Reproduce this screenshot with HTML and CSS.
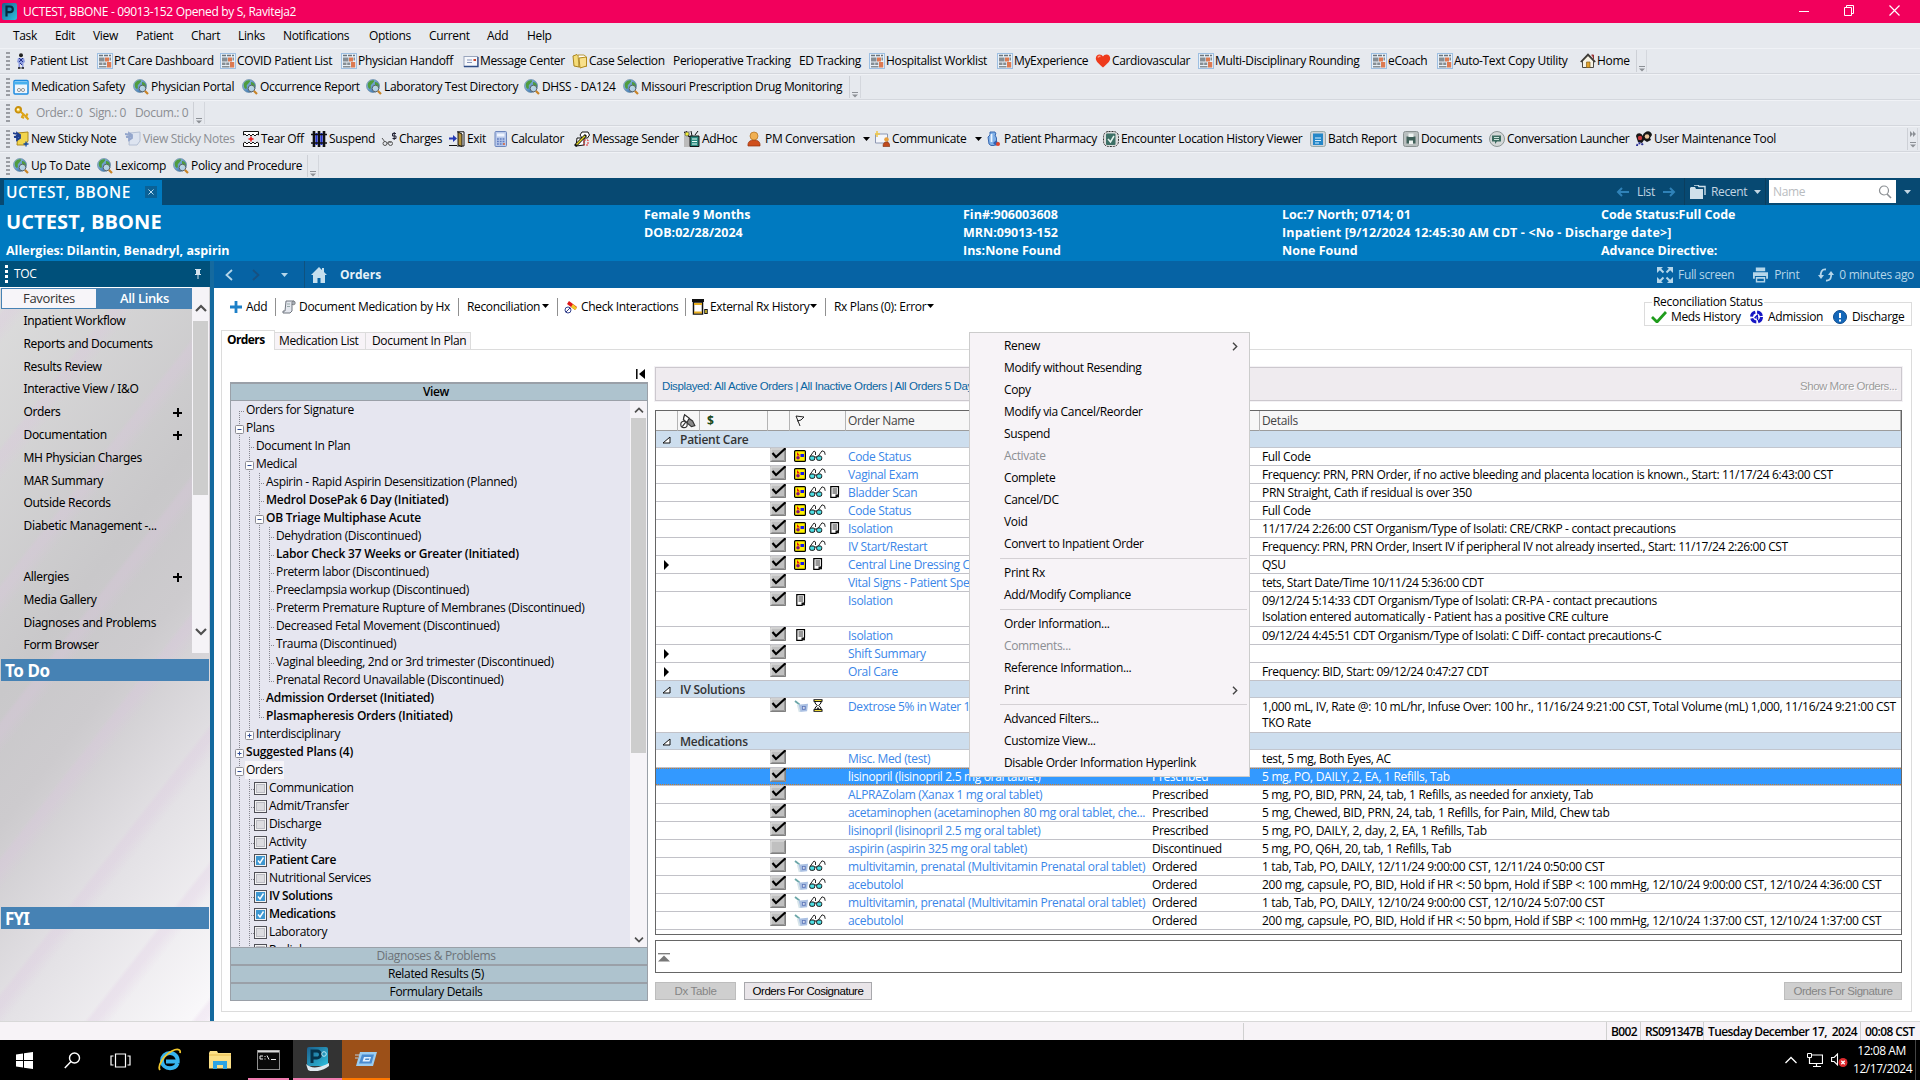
FILE: index.html
```html
<!DOCTYPE html>
<html lang="en">
<head>
<meta charset="utf-8">
<title>UCTEST, BBONE - 09013-152</title>
<link rel="stylesheet" href="styles.css">
</head>
<body>
<svg class="defs" aria-hidden="true">
  <linearGradient id="gGlobe" x1="0" y1="0" x2="1" y2="1"><stop offset="0" stop-color="#a9d4f2"/><stop offset="1" stop-color="#1f5c9c"/></linearGradient>
  <linearGradient id="gP" x1="0" y1="0" x2="1" y2="1"><stop offset="0" stop-color="#1b5f8c"/><stop offset="1" stop-color="#2fc0de"/></linearGradient>
  <symbol id="person" viewBox="0 0 16 16"><circle cx="8" cy="2.3" r="2" fill="#222"/><path d="M5 5h6l1 4-1.500 1v5H9v-4H7v4H5.500v-5L4 9z" fill="#8f9fdf"/><path d="M6 5l4 4M10 5l-4 4M7 10l2 2" stroke="#22308c"/><path d="M5 15h2.500M8.500 15H11" stroke="#111" stroke-width="1.500"/></symbol>
  <symbol id="dash" viewBox="0 0 16 16"><rect x=".5" y=".5" width="15" height="15" fill="#e9f1f8" stroke="#9dbfe2"/><path d="M2 2.500h12" stroke="#6a747c" stroke-width="1.400" stroke-dasharray="4 1"/><path d="M2 4.500h5.500v4H2zM2 9.500h3.500v2.500H2zM2 13h7.500v1.500H2zM6.200 9.500h3v2.500h-3zM12.500 4.500H14v3h-1.500z" fill="#868e94"/><path d="M8 4.500h4v4H8zM10 9h4.200v5.500H10z" fill="#dc7a52"/></symbol>
  <symbol id="mail" viewBox="0 0 16 16"><rect x="1" y="3.500" width="13.500" height="10" fill="#f6f8fc" stroke="#9aa6bd"/><path d="M1 13.500h14V4" fill="none" stroke="#2e4c86" stroke-width="1.300"/><path d="M4 7h5M4 9.500h5" stroke="#8796b8"/><path d="M10.500 6h2.500v2h-2.500z" fill="#c8452d"/></symbol>
  <symbol id="case" viewBox="0 0 16 16"><path d="M1 3l4-1.500 2 2V14l-5-1z" fill="#f5dc78" stroke="#a88420"/><path d="M6 2h6l2.500 2v9.500H7z" fill="#fff" stroke="#b8983a"/><path d="M7 5l7.500-1v9L8 15z" fill="#f8e08a" stroke="#b28a1c"/></symbol>
  <symbol id="heart" viewBox="0 0 16 16"><path d="M8 14.500C4 11 .8 8.500 .8 5.300.8 2.900 2.600 1.500 4.500 1.500c1.500 0 2.800.8 3.500 2 .7-1.200 2-2 3.500-2 1.900 0 3.700 1.400 3.700 3.800C15.200 8.500 12 11 8 14.500z" fill="#ee3a1c"/><path d="M3 4.500c.4-1 1.500-1.300 2.500-1" stroke="#ff9c80" stroke-width="1.500" fill="none"/></symbol>
  <symbol id="home" viewBox="0 0 16 16"><path d="M2.500 8v6.500h11V8L8 2.500z" fill="#f7f3e4" stroke="#4c4a44"/><path d="M.8 9L8 1.500 15.200 9" fill="none" stroke="#3d3a35" stroke-width="1.700"/><path d="M11.500 2h2v4" fill="#c44" stroke="#833"/><path d="M6.500 9h3.500v5.500H6.500z" fill="#e2a22c" stroke="#80601c" stroke-width=".7"/></symbol>
  <symbol id="form" viewBox="0 0 16 16"><rect x="1" y="1.500" width="14" height="13.500" rx="1" fill="#eef6fd" stroke="#1d8ae0" stroke-width="1.500"/><path d="M1 4h14" stroke="#48b0ee" stroke-width="3"/><circle cx="6" cy="11" r="1.600" fill="none" stroke="#999"/><circle cx="10" cy="11" r="1.600" fill="none" stroke="#999"/></symbol>
  <symbol id="globe" viewBox="0 0 16 16"><circle cx="7" cy="7" r="6.500" fill="url(#gGlobe)" stroke="#5a7f9c" stroke-width=".6"/><path d="M2 4c2-3 5-3 6-2.500S6 5 5 6s1 3-1 4C2.500 9.500 1 7 2 4zM9 3c2-.5 4 2 4 4l-2 2-2-2z" fill="#4f9c3e"/><circle cx="9.500" cy="9.500" r="3.300" fill="#d9edf7" fill-opacity=".75" stroke="#59646c"/><path d="M12 12l3 3" stroke="#c98326" stroke-width="2.200"/></symbol>
  <symbol id="keys" viewBox="0 0 16 16"><circle cx="4.300" cy="4.800" r="2.800" fill="#f6d050" stroke="#c88f0c" stroke-width="1.800"/><circle cx="4" cy="4.500" r="1" fill="#fff"/><path d="M6.500 6.500l7 6.500M9.500 8.500L8 12l2 1M13.500 8.500L12 12l2.500 2.500" stroke="#dda51a" stroke-width="2" fill="none"/></symbol>
  <symbol id="note" viewBox="0 0 16 16"><path d="M5 2l10-1v9l-3 4H4z" fill="#f2d54c" stroke="#ad8a1c"/><path d="M0 2l6 1.500M1 6l6-1M4 2l3 2v3L4 9z" stroke="#1d3d8e" stroke-width="1.800" fill="#4c86d0"/><path d="M13 10.500v5M10.500 13h5" stroke="#14489c" stroke-width="1.300"/></symbol>
  <symbol id="notes" viewBox="0 0 16 16"><path d="M5 2l10-1v9l-3 4H4z" fill="#dde4f0" stroke="#b4c0d4"/><path d="M0 3l6 1M1 6l6-1M4 2l3 2v3L4 9z" stroke="#93a6cc" stroke-width="1.800" fill="#a8b8da"/></symbol>
  <symbol id="tear" viewBox="0 0 16 16"><path d="M.5 4V.5h15V4l-1.500-1L12 5l-2-2-2 2-2-2-2 2-2-2zM.5 12v3.500h15V12L14 11l-2 2-2-2-2 2-2-2-2 2-2-2z" fill="#fff" stroke="#111"/><path d="M8 5.500v5M5.500 8h5" stroke="#e11" stroke-width="1.500"/></symbol>
  <symbol id="fence" viewBox="0 0 16 16"><path d="M3 0v16M8 0v16M13 0v16" stroke="#111" stroke-width="2.600"/><path d="M5.500 2v12M10.500 2v12" stroke="#2434d8" stroke-width="2"/><path d="M0 3.500h16M0 12h16" stroke="#111" stroke-width="1.400"/></symbol>
  <symbol id="charges" viewBox="0 0 16 16"><path d="M1 7l3 4M6 13c1-3 3-3 4-1" stroke="#555" fill="none"/><circle cx="4" cy="12.500" r="2" fill="none" stroke="#555"/><circle cx="9.500" cy="12.500" r="2" fill="none" stroke="#555"/><path d="M15 2.500h-3.500v2.500H15v2.500h-3.500M13.200 1v8" stroke="#223" fill="none"/></symbol>
  <symbol id="exit" viewBox="0 0 16 16"><path d="M8 .8h7V15H8" fill="#fff" stroke="#111"/><path d="M9 1l4 2v12.500L9 14z" fill="#b4933c" stroke="#111"/><path d="M0 6.500h4V4l4 3.500L4 11V8.500H0z" fill="#2439b4"/><path d="M0 14.500h8" stroke="#111"/></symbol>
  <symbol id="calc" viewBox="0 0 16 16"><rect x="2" y=".5" width="11.500" height="15" rx="1" fill="#b9c9ea" stroke="#6c86bd"/><path d="M4 2.500h7.500v3H4z" fill="#eef4ff"/><path d="M4 8h7.500M4 10.500h7.500M4 13h7.500" stroke="#5f7cc0" stroke-width="1.600" stroke-dasharray="1.800 1"/><path d="M10 13h2" stroke="#e46a3a" stroke-width="1.500"/></symbol>
  <symbol id="sender" viewBox="0 0 16 16"><path d="M6 4l2-3h6l1.500 3-2 3H8zM3 7h7v7l-8 1z" fill="#fff" stroke="#111"/><path d="M1 15L12 4" stroke="#111" stroke-width="3"/><path d="M2.500 13.500L11 5" stroke="#e4d826" stroke-width="1.500"/><path d="M10 9h4v5h-4z" fill="none" stroke="#e02a2a" stroke-dasharray="2 1"/></symbol>
  <symbol id="adhoc" viewBox="0 0 16 16"><path d="M0 0h6v16H0z" fill="#bbb"/><path d="M6 5h9v10.500H6z" fill="#2a8a80" stroke="#111"/><path d="M8 8h5M8 10.500h5M8 13h5" stroke="#e8fff8"/><path d="M0 1l6 5M2 0l3 6M7 0l1 5M14 0l-3 4" stroke="#111"/><circle cx="3" cy="3" r="2" fill="#f0ec3a" stroke="#333" stroke-width=".5"/></symbol>
  <symbol id="user" viewBox="0 0 16 16"><path d="M1 15c-.5-4 2-6 6-6s6.500 2 6 6z" fill="#cf4f1d" stroke="#94300c" stroke-width=".7"/><circle cx="7" cy="5" r="4" fill="#f0b052" stroke="#b26f1c" stroke-width=".7"/></symbol>
  <symbol id="comm" viewBox="0 0 16 16"><path d="M1.500 3h12v9h-12z" fill="#f4f6fb" stroke="#8c97b2"/><path d="M1 3h5M3 0v6" stroke="#f0c84a" stroke-width="1.500"/><circle cx="12.500" cy="8.500" r="2.300" fill="#eaa03c"/><path d="M9 15.500c0-3 1-4.500 3.500-4.500s3.300 2 3.300 4.500z" fill="#c04a1d" stroke="#7d2b0a" stroke-width=".6"/></symbol>
  <symbol id="pharm" viewBox="0 0 16 16"><path d="M4 1h5l1 2-1 1 1.500 3v6L8 14.500H5L3 13 2 6l2-2z" fill="#7fb0e8" stroke="#3868b0"/><path d="M5.500 3v8" stroke="#eaf4ff" stroke-width="1.800"/><path d="M7 12l3-2.500 3 2.500-3 3z" fill="#3562b2"/><circle cx="12" cy="13" r="2" fill="#e0452b"/></symbol>
  <symbol id="check" viewBox="0 0 16 16"><rect x=".5" y=".5" width="15" height="15" rx="5" fill="#ddd" stroke="#333" stroke-dasharray="2 1"/><rect x="3" y="2.500" width="9.500" height="11.500" rx="1" fill="#3d7066"/><path d="M5 8l2.500 3L11 5" stroke="#e8f4ef" stroke-width="1.500" fill="none"/></symbol>
  <symbol id="batch" viewBox="0 0 16 16"><rect x=".5" y=".5" width="15" height="15" rx="2" fill="#cfd4d8" stroke="#9aa"/><rect x="3" y="2.500" width="10" height="11.500" fill="#2587c8"/><path d="M5 7h6M5 9.500h6M5 12h4" stroke="#d6efff"/></symbol>
  <symbol id="docs" viewBox="0 0 16 16"><rect x=".5" y=".5" width="15" height="15" rx="2" fill="#b9bfbf" stroke="#8a9292"/><path d="M3.500 5.500h9v7h-9z" fill="#3e5f58"/><path d="M5.500 2.500h5v3.500h-5zM6 9.500h4v3.500H6z" fill="#eef3f1"/></symbol>
  <symbol id="conv" viewBox="0 0 16 16"><circle cx="8" cy="8" r="7.500" fill="#d4d8d8" stroke="#8d9696"/><path d="M3 4.500h9v6H8l-2 2.500v-2.500H3z" fill="#3c6b60"/><path d="M5 6.500h5M5 8.500h5" stroke="#cfe4dc"/></symbol>
  <symbol id="users" viewBox="0 0 16 16"><path d="M0 5c1-4 6-3 6.500 0C9-1 15-1 16 4l-2 3 1 2-4 2-3-2-2 3-4-1z" fill="#161616"/><circle cx="4" cy="7" r="2.200" fill="#c8383c"/><circle cx="11" cy="5.500" r="2.300" fill="#e9c49a"/><path d="M1 15c0-3 4-4 6-1" stroke="#2c3296" stroke-width="2" stroke-dasharray="2 1" fill="none"/></symbol>
  <symbol id="flowchk" viewBox="0 0 16 14"><path d="M0 0h16v14H0z" fill="#c0c0c0"/><path d="M1 13V1h14" fill="none" stroke="#e2e2e2"/><path d="M.5 13.500h15V.5" fill="none" stroke="#808080"/><path d="M1.500 12.500H14.500V1" fill="none" stroke="#989898"/></symbol>
  <symbol id="on" viewBox="0 0 16 14"><use href="#flowchk"/><path d="M2.500 5L6 9 15.500.3" fill="none" stroke="#000" stroke-width="2.200"/></symbol>
  <symbol id="plan" viewBox="0 0 12 12"><rect x=".6" y=".6" width="10.800" height="10.800" rx="1" fill="#fff200" stroke="#000" stroke-width="1.200"/><path d="M3 2l3 3.500H3z" fill="#e81010"/><path d="M6.500 4H10v3H6.500z" fill="#1414f0"/><circle cx="4" cy="7.800" r="1.800" fill="#86107c"/></symbol>
  <symbol id="glass" viewBox="0 0 17 11"><path d="M1 6.500L5 1l1.500 1v3M9 6.500L13 .8l2.500 1 .7 3" fill="none" stroke="#111" stroke-width=".9"/><rect x=".7" y="6" width="5" height="4.300" rx="1.500" fill="#4fe0e6" stroke="#111"/><rect x="7.700" y="6" width="5" height="4.300" rx="1.500" fill="#4fe0e6" stroke="#111"/><path d="M5.500 7h2.500" stroke="#111"/></symbol>
  <symbol id="paper" viewBox="0 0 10 12"><path d="M.8.6h7.700v8L6 11.300H.8z" fill="#fff" stroke="#000" stroke-width="1.200"/><path d="M2.500 3h4.500M2.500 5h4.500M2.500 7h4.500" stroke="#333"/><path d="M5.500 8.500h3.500v2.800H5.500z" fill="#111"/></symbol>
  <symbol id="iv" viewBox="0 0 16 14"><path d="M1 1l5 4" stroke="#6aa6a8" stroke-width="2"/><path d="M4 5l11-1-1 8-8 1z" fill="#a9bfe2"/><path d="M4 5l2 8" stroke="#d6e4ea" stroke-width="2"/><rect x="8.500" y="6.500" width="4" height="4" fill="#5f78bb"/><path d="M10.500 7.300v2.400M9.300 8.500h2.400" stroke="#fff" stroke-width=".8"/></symbol>
  <symbol id="hour" viewBox="0 0 10 13"><path d="M2 2h6v2L5.800 6.500 8 9v2H2V9l2.200-2.500L2 4z" fill="#fff" stroke="#000"/><path d="M3 10.500h4L5 8z" fill="#333"/><path d="M.5 1.500h9M.5 11.500h9" stroke="#000" stroke-width="2.600"/><path d="M1.500 1.500h7M1.500 11.500h7" stroke="#ecd838" stroke-width="1.200"/></symbol>
  <symbol id="tri" viewBox="0 0 5 10"><path d="M0 0l5 5-5 5z" fill="#000"/></symbol>
  <symbol id="fold" viewBox="0 0 9 8"><path d="M1 7h7V1z" fill="#fff" stroke="#111"/></symbol>
  <symbol id="minus" viewBox="0 0 10 10"><rect x=".5" y=".5" width="8" height="8" rx="1" fill="#fdfdfd" stroke="#8c8c94"/><path d="M2.500 4.500h4" stroke="#2d4a96"/></symbol>
  <symbol id="plus" viewBox="0 0 10 10"><rect x=".5" y=".5" width="8" height="8" rx="1" fill="#fdfdfd" stroke="#8c8c94"/><path d="M2.500 4.500h4M4.500 2.500v4" stroke="#2d4a96"/></symbol>
  <symbol id="box" viewBox="0 0 13 13"><rect x=".5" y=".5" width="12" height="12" fill="#f3f3f3" stroke="#4f4f57"/><rect x="2.500" y="2.500" width="8" height="8" fill="#dcdce0" stroke="#bcbcc4"/></symbol>
  <symbol id="boxon" viewBox="0 0 13 13"><rect x=".5" y=".5" width="12" height="12" fill="#f3f3f3" stroke="#4f4f57"/><rect x="2" y="2" width="9" height="9" fill="#3f97d0"/><path d="M4 6.500l2 2.500 3.500-5.500" stroke="#fff" stroke-width="1.400" fill="none"/></symbol>
  <symbol id="down" viewBox="0 0 7 4"><path d="M0 0h7L3.500 4z" fill="currentColor"/></symbol>
  <symbol id="over" viewBox="0 0 6 6"><path d="M0 .5h6" stroke="#8c9096"/><path d="M0 2.500h6L3 5.500z" fill="#8c9096"/></symbol>
  <symbol id="up" viewBox="0 0 12 8"><path d="M1 7l5-5 5 5" fill="none" stroke="#505050" stroke-width="2.200"/></symbol>
  <symbol id="dn" viewBox="0 0 12 8"><path d="M1 1l5 5 5-5" fill="none" stroke="#505050" stroke-width="2.200"/></symbol>
  <symbol id="ar" viewBox="0 0 6 9"><path d="M1 .8l3.700 3.700L1 8.200" fill="none" stroke="#444" stroke-width="1.400"/></symbol>
</svg>

<header class="title">
  <svg class="applogo" viewBox="0 0 15 17"><rect width="15" height="17" rx="2" fill="url(#gP)"/><path d="M4.500 13.500V3.500h3.500a2.700 2.700 0 010 5.600H4.500" fill="none" stroke="#062b40" stroke-width="2.200"/></svg>
  <span>UCTEST, BBONE - 09013-152 Opened by S, Raviteja2</span>
  <div class="winbtns">
    <svg viewBox="0 0 11 11"><path d="M0 6.500h10" stroke="#fff"/></svg>
    <svg viewBox="0 0 11 11"><path d="M.5 2.500h7v8h-7zM2.500 2.500v-2h7v8h-2" fill="none" stroke="#fff"/></svg>
    <svg viewBox="0 0 11 11"><path d="M.5.5l10 10M10.500.5l-10 10" stroke="#fff" stroke-width="1.200"/></svg>
  </div>
</header>
<nav class="menubar"><span>Task</span><span>Edit</span><span>View</span><span>Patient</span><span>Chart</span><span>Links</span><span>Notifications</span><span>Options</span><span>Current</span><span>Add</span><span>Help</span></nav>

<div class="toolbar t1"><b></b>
<a><svg><use href="#person"/></svg>Patient List</a><a><svg><use href="#dash"/></svg>Pt Care Dashboard</a><a><svg><use href="#dash"/></svg>COVID Patient List</a><a><svg><use href="#dash"/></svg>Physician Handoff</a><a><svg><use href="#mail"/></svg>Message Center</a><a><svg><use href="#case"/></svg>Case Selection</a><a>Perioperative Tracking</a><a>ED Tracking</a><a><svg><use href="#dash"/></svg>Hospitalist Worklist</a><a><svg><use href="#dash"/></svg>MyExperience</a><a><svg><use href="#heart"/></svg>Cardiovascular</a><a><svg><use href="#dash"/></svg>Multi-Disciplinary Rounding</a><a><svg><use href="#dash"/></svg>eCoach</a><a><svg><use href="#dash"/></svg>Auto-Text Copy Utility</a><a><svg><use href="#home"/></svg>Home</a><em><svg><use href="#over"/></svg></em></div>
<div class="toolbar t2"><b></b>
<a><svg><use href="#form"/></svg>Medication Safety</a><a><svg><use href="#globe"/></svg>Physician Portal</a><a><svg><use href="#globe"/></svg>Occurrence Report</a><a><svg><use href="#globe"/></svg>Laboratory Test Directory</a><a><svg><use href="#globe"/></svg>DHSS - DA124</a><a><svg><use href="#globe"/></svg>Missouri Prescription Drug Monitoring</a><em><svg><use href="#over"/></svg></em></div>
<div class="toolbar t3"><b></b>
<a><svg><use href="#keys"/></svg></a><a>Order.: 0</a><a>Sign.: 0</a><a>Docum.: 0</a><em><svg><use href="#over"/></svg></em></div>
<div class="toolbar t4"><b></b>
<a><svg><use href="#note"/></svg>New Sticky Note</a><a class="off"><svg><use href="#notes"/></svg>View Sticky Notes</a><a><svg><use href="#tear"/></svg>Tear Off</a><a><svg><use href="#fence"/></svg>Suspend</a><a><svg><use href="#charges"/></svg>Charges</a><a><svg><use href="#exit"/></svg>Exit</a><a><svg><use href="#calc"/></svg>Calculator</a><a><svg><use href="#sender"/></svg>Message Sender</a><a><svg><use href="#adhoc"/></svg>AdHoc</a><a><svg><use href="#user"/></svg>PM Conversation<svg class="dd"><use href="#down"/></svg></a><a><svg><use href="#comm"/></svg>Communicate<svg class="dd"><use href="#down"/></svg></a><a><svg><use href="#pharm"/></svg>Patient Pharmacy</a><a><svg><use href="#check"/></svg>Encounter Location History Viewer</a><a><svg><use href="#batch"/></svg>Batch Report</a><a><svg><use href="#docs"/></svg>Documents</a><a><svg><use href="#conv"/></svg>Conversation Launcher</a><a><svg><use href="#users"/></svg>User Maintenance Tool</a><em class="two"><svg viewBox="0 0 6 6"><path d="M0 0l3 3-3 3zM3 0l3 3-3 3z" fill="#8c9096"/></svg><svg><use href="#over"/></svg></em></div>
<div class="toolbar t5"><b></b>
<a><svg><use href="#globe"/></svg>Up To Date</a><a><svg><use href="#globe"/></svg>Lexicomp</a><a><svg><use href="#globe"/></svg>Policy and Procedure</a><em><svg><use href="#over"/></svg></em></div>

<div class="tabbar">
  <div class="pttab"><span>UCTEST, BBONE</span><svg viewBox="0 0 12 12"><rect width="12" height="12" fill="#0a6196"/><path d="M3.500 3.500l5 5M8.500 3.500l-5 5" stroke="#b9dcf0"/></svg></div>
  <div class="tabnav">
    <svg class="nav" viewBox="0 0 13 10"><path d="M13 5H2M6 1L2 5l4 4" fill="none" stroke="#2f82b8" stroke-width="2"/></svg>
    <span class="lst">List</span>
    <svg class="nav" viewBox="0 0 13 10"><path d="M0 5h11M7 1l4 4-4 4" fill="none" stroke="#2f82b8" stroke-width="2"/></svg>
    <div class="recent"><svg class="fold" viewBox="0 0 16 14"><path d="M0 3l1-1h4l1 2h7v10H0z" fill="#cfe0ea"/><path d="M4 0h4l1 1.500h6V10" fill="none" stroke="#cfe0ea" stroke-width="1.400"/></svg><span>Recent</span><svg class="dd"><use href="#down"/></svg></div>
    <div class="search"><span>Name</span><svg viewBox="0 0 14 14"><circle cx="6" cy="5.500" r="4.500" fill="none" stroke="#8b8f93" stroke-width="1.200"/><path d="M9 9l4 4" stroke="#8b8f93" stroke-width="1.600"/></svg></div>
    <svg class="dd last"><use href="#down"/></svg>
  </div>
</div>
<section class="banner">
  <div><h1>UCTEST, BBONE</h1><p>Allergies: Dilantin, Benadryl, aspirin</p></div>
  <div><p>Female 9 Months</p><p>DOB:02/28/2024</p></div>
  <div><p>Fin#:906003608</p><p>MRN:09013-152</p><p>Ins:None Found</p></div>
  <div><p>Loc:7 North; 0714; 01</p><p class="wide">Inpatient [9/12/2024 12:45:30 AM CDT - &lt;No - Discharge date&gt;]</p><p>None Found</p></div>
  <div><p>Code Status:Full Code</p><p class="blank"></p><p>Advance Directive:</p></div>
</section>

<div class="work">
  <aside class="toc">
    <div class="tochead"><b></b><span>TOC</span><svg viewBox="0 0 8 10"><path d="M1 0h6v1H6v4h1v1H4.500v4h-1V6H1V5h1V1H1z" fill="#d5e4ee"/></svg></div>
    <div class="tocbody">
      <div class="tocmain">
        <div class="toctabs"><span>Favorites</span><span class="sel">All Links</span></div>
        <ul><li>Inpatient Workflow</li><li>Reports and Documents</li><li>Results Review</li><li>Interactive View / I&amp;O</li><li class="m">Orders</li><li class="m">Documentation</li><li>MH Physician Charges</li><li>MAR Summary</li><li>Outside Records</li><li>Diabetic Management -...</li><li class="m skip">Allergies</li><li>Media Gallery</li><li>Diagnoses and Problems</li><li>Form Browser</li></ul>
      </div>
      <div class="sb tocsb"><svg><use href="#up"/></svg><i></i><svg><use href="#dn"/></svg></div>
    </div>
    <h2>To Do</h2>
    <h2 class="fyi">FYI</h2>
  </aside>
  <div class="strip"></div>
  <main>
    <div class="pagebar">
      <svg class="prev" viewBox="0 0 8 12"><path d="M7 1L1.500 6 7 11" fill="none" stroke="#b5d6ea" stroke-width="1.800"/></svg>
      <svg class="next" viewBox="0 0 8 12"><path d="M1 1l5.500 5L1 11" fill="none" stroke="#185080" stroke-width="1.800"/></svg>
      <svg class="dd"><use href="#down"/></svg>
      <div class="here"><svg viewBox="0 0 16 16"><path d="M8 0L0 8h2v8h4.500v-5h3v5H14V8h2L13 5V1h-2v2z" fill="#c6dfee"/></svg><b>Orders</b></div>
      <div class="pagetools">
        <svg viewBox="0 0 16 16"><path d="M0 0h6L4.200 1.800l3 3-1.400 1.400-3-3L0 6zM16 0v6l-2.800-2.800-3 3-1.400-1.400 3-3L10 0zM0 16v-6l2.800 2.800 3-3 1.400 1.400-3 3L6 16zM16 16h-6l1.800-1.800-3-3 1.400-1.400 3 3L16 10z" fill="#b5d6ea"/></svg><span>Full screen</span>
        <svg class="pr" viewBox="0 0 16 16"><path d="M3 0h10v4H3zM0 5h16v7h-2V9H2v3H0zM3 10h10v6H3z" fill="#b5d6ea"/><path d="M4.500 12h7v2.500h-7z" fill="#0663a4"/></svg><span>Print</span>
        <svg class="rf" viewBox="0 0 16 14"><path d="M8 1.500C4 1 2 4 3 9M8 12.500c4 .5 6-2.500 5-7.500" fill="none" stroke="#b5d6ea" stroke-width="1.800"/><path d="M0 7h6l-3 4zM10 7h6l-3-4z" fill="#b5d6ea"/></svg><span>0 minutes ago</span>
      </div>
    </div>
    <div class="actions">
      <div class="act a1"><svg class="ai" viewBox="0 0 12 12"><path d="M6 0v12M0 6h12" stroke="#1d80c8" stroke-width="2.800"/></svg>Add</div>
      <div class="act a2"><svg class="ai" viewBox="0 0 14 14"><path d="M4 1h8v3h-2v7l-2 2H1v-2h2z" fill="#e4e7ee" stroke="#6f757e"/><path d="M5 4h3M5 6.500h3" stroke="#9aa"/><circle cx="11.500" cy="3" r="1.800" fill="#a6adb8" stroke="#666" stroke-width=".6"/></svg>Document Medication by Hx</div>
      <div class="act a3">Reconciliation<svg class="dd"><use href="#down"/></svg></div>
      <div class="act a4"><svg class="ai" viewBox="0 0 14 14"><path d="M5 1l8 6-2 3-8-6z" fill="#e01818"/><path d="M9 4l4 4-2 2-4-3z" fill="#f0cc28"/><circle cx="4" cy="10" r="3" fill="#fff" stroke="#33408c"/><path d="M2 12l4-4" stroke="#33408c"/></svg>Check Interactions</div>
      <div class="act a5"><svg class="ai" viewBox="0 0 16 16"><path d="M0 0h12v3H0z" fill="#111"/><path d="M1.500 3h9v12h-9z" fill="#fff" stroke="#111" stroke-width="1.500"/><path d="M2 5h8M2 13.500h8" stroke="#e8ae20" stroke-width="2"/><path d="M14 10v5" stroke="#111" stroke-width="3.500"/><path d="M14 11v3" stroke="#e8d030" stroke-width="1.500"/></svg>External Rx History<svg class="dd"><use href="#down"/></svg></div>
      <div class="act a6">Rx Plans (0): Error<svg class="dd"><use href="#down"/></svg></div>
      <fieldset class="recon"><legend>Reconciliation Status</legend>
        <svg viewBox="0 0 16 12"><path d="M1 6l5 5L15 1" fill="none" stroke="#1f9c1c" stroke-width="2.800"/></svg><span>Meds History</span>
        <svg class="adm" viewBox="0 0 14 14"><circle cx="7" cy="7" r="5" fill="none" stroke="#1717c4" stroke-width="3" stroke-dasharray="6 1.850"/><path d="M5 8h4M8 4.500v5.500M5 8l3-3" stroke="#1717c4" stroke-width="1.100"/></svg><span>Admission</span>
        <svg class="dis" viewBox="0 0 14 14"><circle cx="7" cy="7" r="6.500" fill="#1468ba" stroke="#0d4c8e"/><path d="M7 3v5M7 9.500v2" stroke="#fff" stroke-width="2"/></svg><span>Discharge</span>
      </fieldset>
    </div>
    <div class="tabs"><span class="cur">Orders</span><span>Medication List</span><span>Document In Plan</span></div>
    <div class="panel">
      <div class="leftcol">
        <div class="collapse"><svg viewBox="0 0 9 10"><path d="M.8 0v10" stroke="#000" stroke-width="1.500"/><path d="M9 0v10L3 5z" fill="#000"/></svg></div>
        <div class="viewhead">View</div>
        <div class="treewrap">
          <ul class="tree">
            <li><i class="f"></i>Orders for Signature</li>
            <li><i class="x"><svg><use href="#minus"/></svg></i>Plans</li>
            <li><i class="v"></i><i class="t"></i>Document In Plan</li>
            <li><i class="v"></i><i class="x"><svg><use href="#minus"/></svg></i>Medical</li>
            <li><i class="v"></i><i class="v"></i><i class="t"></i>Aspirin - Rapid Aspirin Desensitization (Planned)</li>
            <li class="b"><i class="v"></i><i class="v"></i><i class="t"></i>Medrol DosePak 6 Day (Initiated)</li>
            <li class="b"><i class="v"></i><i class="v"></i><i class="x"><svg><use href="#minus"/></svg></i>OB Triage Multiphase Acute</li>
            <li><i class="v"></i><i class="v"></i><i class="v"></i><i class="t"></i>Dehydration (Discontinued)</li>
            <li class="b"><i class="v"></i><i class="v"></i><i class="v"></i><i class="t"></i>Labor Check 37 Weeks or Greater (Initiated)</li>
            <li><i class="v"></i><i class="v"></i><i class="v"></i><i class="t"></i>Preterm labor (Discontinued)</li>
            <li><i class="v"></i><i class="v"></i><i class="v"></i><i class="t"></i>Preeclampsia workup (Discontinued)</li>
            <li><i class="v"></i><i class="v"></i><i class="v"></i><i class="t"></i>Preterm Premature Rupture of Membranes (Discontinued)</li>
            <li><i class="v"></i><i class="v"></i><i class="v"></i><i class="t"></i>Decreased Fetal Movement (Discontinued)</li>
            <li><i class="v"></i><i class="v"></i><i class="v"></i><i class="t"></i>Trauma (Discontinued)</li>
            <li><i class="v"></i><i class="v"></i><i class="v"></i><i class="t"></i>Vaginal bleeding, 2nd or 3rd trimester (Discontinued)</li>
            <li><i class="v"></i><i class="v"></i><i class="v"></i><i class="l"></i>Prenatal Record Unavailable (Discontinued)</li>
            <li class="b"><i class="v"></i><i class="v"></i><i class="t"></i>Admission Orderset (Initiated)</li>
            <li class="b"><i class="v"></i><i class="v"></i><i class="l"></i>Plasmapheresis Orders (Initiated)</li>
            <li><i class="v"></i><i class="x end"><svg><use href="#plus"/></svg></i>Interdisciplinary</li>
            <li class="b"><i class="x"><svg><use href="#plus"/></svg></i>Suggested Plans (4)</li>
            <li><i class="x"><svg><use href="#minus"/></svg></i><span class="hl">Orders</span></li>
            <li><i class="v"></i><i class="t"></i><svg><use href="#box"/></svg>Communication</li>
            <li><i class="v"></i><i class="t"></i><svg><use href="#box"/></svg>Admit/Transfer</li>
            <li><i class="v"></i><i class="t"></i><svg><use href="#box"/></svg>Discharge</li>
            <li><i class="v"></i><i class="t"></i><svg><use href="#box"/></svg>Activity</li>
            <li class="b c"><i class="v"></i><i class="t"></i><svg><use href="#boxon"/></svg>Patient Care</li>
            <li><i class="v"></i><i class="t"></i><svg><use href="#box"/></svg>Nutritional Services</li>
            <li class="b c"><i class="v"></i><i class="t"></i><svg><use href="#boxon"/></svg>IV Solutions</li>
            <li class="b c"><i class="v"></i><i class="t"></i><svg><use href="#boxon"/></svg>Medications</li>
            <li><i class="v"></i><i class="t"></i><svg><use href="#box"/></svg>Laboratory</li>
            <li><i class="v"></i><i class="t"></i><svg><use href="#box"/></svg>Radiology</li>
          </ul>
          <div class="sb treesb"><svg><use href="#up"/></svg><i></i><svg><use href="#dn"/></svg></div>
        </div>
        <div class="drawer off">Diagnoses &amp; Problems</div>
        <div class="drawer">Related Results (5)</div>
        <div class="drawer">Formulary Details</div>
      </div>
      <div class="rightcol">
        <div class="filter"><span>Displayed: All Active Orders | All Inactive Orders | All Orders 5 Days</span><span class="more">Show More Orders...</span></div>
        <div class="grid">
          <div class="row head"><span></span><span class="c"><svg class="pill" viewBox="0 0 14 14"><path d="M4 2l7 5 2 4-3 1-7-6z" fill="#8a8a8a" stroke="#333"/><path d="M4 1.500l4 3-2 4-3-3z" fill="#fff" stroke="#333"/><circle cx="3.500" cy="10" r="2.800" fill="#fff" stroke="#333"/><path d="M2 12l3-4" stroke="#333"/></svg></span><span class="c dol">$</span><span></span><span class="c"><svg class="flag" viewBox="0 0 10 12"><path d="M1 1l8 1-3 3-4 1M1 1l4 10" fill="none" stroke="#222"/></svg></span><span>Order Name</span><span>Status</span><span>Details</span></div>
          <div class="group"><svg><use href="#fold"/></svg>Patient Care</div>
          <div class="row"><u></u><s><svg><use href="#on"/></svg></s><q><svg class="pl"><use href="#plan"/></svg><svg class="gl"><use href="#glass"/></svg></q><a>Code Status</a><span></span><span>Full Code</span></div>
          <div class="row"><u></u><s><svg><use href="#on"/></svg></s><q><svg class="pl"><use href="#plan"/></svg><svg class="gl"><use href="#glass"/></svg></q><a>Vaginal Exam</a><span></span><span>Frequency: PRN, PRN Order, if no active bleeding and placenta location is known., Start: 11/17/24 6:43:00 CST</span></div>
          <div class="row"><u></u><s><svg><use href="#on"/></svg></s><q><svg class="pl"><use href="#plan"/></svg><svg class="gl"><use href="#glass"/></svg><svg class="pa"><use href="#paper"/></svg></q><a>Bladder Scan</a><span></span><span>PRN Straight, Cath if residual is over 350</span></div>
          <div class="row"><u></u><s><svg><use href="#on"/></svg></s><q><svg class="pl"><use href="#plan"/></svg><svg class="gl"><use href="#glass"/></svg></q><a>Code Status</a><span></span><span>Full Code</span></div>
          <div class="row"><u></u><s><svg><use href="#on"/></svg></s><q><svg class="pl"><use href="#plan"/></svg><svg class="gl"><use href="#glass"/></svg><svg class="pa"><use href="#paper"/></svg></q><a>Isolation</a><span></span><span>11/17/24 2:26:00 CST Organism/Type of Isolati: CRE/CRKP - contact precautions</span></div>
          <div class="row"><u></u><s><svg><use href="#on"/></svg></s><q><svg class="pl"><use href="#plan"/></svg><svg class="gl"><use href="#glass"/></svg></q><a>IV Start/Restart</a><span></span><span class="snug">Frequency: PRN, PRN Order, Insert IV if peripheral IV not already inserted., Start: 11/17/24 2:26:00 CST</span></div>
          <div class="row"><u><svg><use href="#tri"/></svg></u><s><svg><use href="#on"/></svg></s><q><svg class="pl"><use href="#plan"/></svg><svg class="pa mid"><use href="#paper"/></svg></q><a>Central Line Dressing Change</a><span></span><span>QSU</span></div>
          <div class="row"><u></u><s><svg><use href="#on"/></svg></s><q></q><a>Vital Signs - Patient Specific</a><span></span><span class="snug">tets, Start Date/Time 10/11/24 5:36:00 CDT</span></div>
          <div class="row tall"><u></u><s><svg><use href="#on"/></svg></s><q><svg class="pa one"><use href="#paper"/></svg></q><a>Isolation</a><span></span><span>09/12/24 5:14:33 CDT Organism/Type of Isolati: CR-PA - contact precautions<br>Isolation entered automatically - Patient has a positive CRE culture</span></div>
          <div class="row"><u></u><s><svg><use href="#on"/></svg></s><q><svg class="pa one"><use href="#paper"/></svg></q><a>Isolation</a><span></span><span>09/12/24 4:45:51 CDT Organism/Type of Isolati: C Diff- contact precautions-C</span></div>
          <div class="row"><u><svg><use href="#tri"/></svg></u><s><svg><use href="#on"/></svg></s><q></q><a>Shift Summary</a><span></span><span></span></div>
          <div class="row"><u><svg><use href="#tri"/></svg></u><s><svg><use href="#on"/></svg></s><q></q><a>Oral Care</a><span></span><span class="snug">Frequency: BID, Start: 09/12/24 0:47:27 CDT</span></div>
          <div class="group"><svg><use href="#fold"/></svg>IV Solutions</div>
          <div class="row tall"><u></u><s><svg><use href="#on"/></svg></s><q><svg class="iv"><use href="#iv"/></svg><svg class="ho"><use href="#hour"/></svg></q><a class="snug">Dextrose 5% in Water 1,000 mL</a><span></span><span>1,000 mL, IV, Rate @: 10 mL/hr, Infuse Over: 100 hr., 11/16/24 9:21:00 CST, Total Volume (mL) 1,000, 11/16/24 9:21:00 CST<br>TKO Rate</span></div>
          <div class="group"><svg><use href="#fold"/></svg>Medications</div>
          <div class="row"><u></u><s><svg><use href="#on"/></svg></s><q></q><a>Misc. Med (test)</a><span></span><span>test, 5 mg, Both Eyes, AC</span></div>
          <div class="row picked"><u></u><s><svg><use href="#on"/></svg></s><q></q><a>lisinopril (lisinopril 2.5 mg oral tablet)</a><span>Prescribed</span><span class="airy">5 mg, PO, DAILY, 2, EA, 1 Refills, Tab</span></div>
          <div class="row"><u></u><s><svg><use href="#on"/></svg></s><q></q><a>ALPRAZolam (Xanax 1 mg oral tablet)</a><span>Prescribed</span><span>5 mg, PO, BID, PRN, 24, tab, 1 Refills, as needed for anxiety, Tab</span></div>
          <div class="row"><u></u><s><svg><use href="#on"/></svg></s><q></q><a>acetaminophen (acetaminophen 80 mg oral tablet, che...</a><span>Prescribed</span><span class="airy">5 mg, Chewed, BID, PRN, 24, tab, 1 Refills, for Pain, Mild, Chew tab</span></div>
          <div class="row"><u></u><s><svg><use href="#on"/></svg></s><q></q><a>lisinopril (lisinopril 2.5 mg oral tablet)</a><span>Prescribed</span><span class="airy">5 mg, PO, DAILY, 2, day, 2, EA, 1 Refills, Tab</span></div>
          <div class="row"><u></u><s><svg><use href="#flowchk"/></svg></s><q></q><a>aspirin (aspirin 325 mg oral tablet)</a><span>Discontinued</span><span>5 mg, PO, Q6H, 20, tab, 1 Refills, Tab</span></div>
          <div class="row"><u></u><s><svg><use href="#on"/></svg></s><q><svg class="iv"><use href="#iv"/></svg><svg class="gl"><use href="#glass"/></svg></q><a class="airy">multivitamin, prenatal (Multivitamin Prenatal oral tablet)</a><span>Ordered</span><span>1 tab, Tab, PO, DAILY, 12/11/24 9:00:00 CST, 12/11/24 0:50:00 CST</span></div>
          <div class="row"><u></u><s><svg><use href="#on"/></svg></s><q><svg class="iv"><use href="#iv"/></svg><svg class="gl"><use href="#glass"/></svg></q><a>acebutolol</a><span>Ordered</span><span class="airy">200 mg, capsule, PO, BID, Hold if HR &lt;: 50 bpm, Hold if SBP &lt;: 100 mmHg, 12/10/24 9:00:00 CST, 12/10/24 4:36:00 CST</span></div>
          <div class="row"><u></u><s><svg><use href="#on"/></svg></s><q><svg class="iv"><use href="#iv"/></svg><svg class="gl"><use href="#glass"/></svg></q><a class="airy">multivitamin, prenatal (Multivitamin Prenatal oral tablet)</a><span>Ordered</span><span>1 tab, Tab, PO, DAILY, 12/10/24 9:00:00 CST, 12/10/24 5:07:00 CST</span></div>
          <div class="row"><u></u><s><svg><use href="#on"/></svg></s><q><svg class="iv"><use href="#iv"/></svg><svg class="gl"><use href="#glass"/></svg></q><a>acebutolol</a><span>Ordered</span><span class="airy">200 mg, capsule, PO, BID, Hold if HR &lt;: 50 bpm, Hold if SBP &lt;: 100 mmHg, 12/10/24 1:37:00 CST, 12/10/24 1:37:00 CST</span></div>
        </div>
        <div class="detailbar"><svg viewBox="0 0 12 9"><path d="M0 .7h12" stroke="#777" stroke-width="1.300"/><path d="M0 8.500h12L6 2.500z" fill="#777"/></svg></div>
        <div class="buttons"><button class="dx" disabled>Dx Table</button><button class="cos">Orders For Cosignature</button><button class="sig" disabled>Orders For Signature</button></div>
      </div>
    </div>
  </main>
</div>

<footer class="status"><span></span><span>B002</span><span>RS091347B</span><span>Tuesday December 17,&nbsp; 2024</span><span>00:08 CST</span></footer>
<div class="taskbar">
  <div class="tb"><svg width="17" height="17" viewBox="0 0 17 17"><path d="M0 2.500l7-1V8H0zM8 1.300L17 0v8H8zM0 9h7v6.500l-7-1zM8 9h9v8l-9-1.300z" fill="#fff"/></svg></div>
  <div class="tb"><svg width="17" height="17" viewBox="0 0 17 17"><circle cx="10.500" cy="6" r="5" fill="none" stroke="#fff" stroke-width="1.400"/><path d="M7 9.500L.8 16" stroke="#fff" stroke-width="1.500"/></svg></div>
  <div class="tb"><svg width="21" height="15" viewBox="0 0 21 15"><path d="M5.500 1h10v13h-10zM3.500 3H1v9h2.500M17.500 3H20v9h-2.500" fill="none" stroke="#fff" stroke-width="1.200"/></svg></div>
  <div class="tb ie"><svg width="24" height="24" viewBox="0 0 24 24"><path d="M19.500 15.500c-1.200 3-4 4.700-7.500 4.700-4.500 0-8-3-8-7.500S7.500 5 12 5s8 3.500 7.700 8.500H8" fill="none" stroke="#37b4ee" stroke-width="4"/><path d="M2 22C-1 18 6 7 14 3c5-2.500 9-2 8 2" fill="none" stroke="#f0c62c" stroke-width="1.800"/></svg></div>
  <div class="tb"><svg width="22" height="18" viewBox="0 0 22 18"><path d="M0 2l1-2h7l1 2h13v15.500H0z" fill="#fbdf86"/><path d="M4 18v-8h14v8h-4v-4H8v4z" fill="#2ca4e4"/><path d="M0 4h22" stroke="#e6bb4c"/></svg></div>
  <div class="tb run"><svg width="23" height="20" viewBox="0 0 23 20"><rect x=".5" y=".5" width="22" height="19" fill="#0a0a0a" stroke="#8f8f8f"/><path d="M1 1.500h21" stroke="#ddd" stroke-width="2"/><path d="M3 6h3M3 6v3h3M8 6v1M8 8.500v1M10 5.500l2 4M14 9.500h5" stroke="#eee" fill="none"/></svg></div>
  <div class="tb front"><svg width="24" height="24" viewBox="0 0 24 24"><rect x="1" y="0" width="21" height="19" rx="2" fill="url(#gP)"/><path d="M0 17c6 6 16 3 23-1v3c-6 5-17 7-21 4z" fill="#dfe9ef"/><path d="M6 16V4h5a3.500 3.500 0 010 7H6" fill="none" stroke="#06324a" stroke-width="3"/><circle cx="18" cy="7" r="2.300" fill="none" stroke="#bfe9f5"/></svg></div>
  <div class="tb hot"><svg width="22" height="15" viewBox="0 0 22 15"><path d="M5 0h17l-4 14H1z" fill="#9ccdf0"/><path d="M7 2.500h12l-2.500 9H4z" fill="#4a8cd0"/><path d="M9 5h7l-1.500 4.500H7.500z" fill="#dff0ff"/><path d="M10.500 6.500h4l-.5 1.500h-4z" fill="#4a8cd0"/><path d="M0 3h5M0 6h3" stroke="#bcd"/></svg></div>
  <div class="tray">
    <svg class="y1" viewBox="0 0 12 8"><path d="M.5 7L6 1.500 11.500 7" fill="none" stroke="#fff" stroke-width="1.300"/></svg>
    <svg class="y2" viewBox="0 0 16 14"><path d="M4 2h11.500v8.500H2.500V5M6 13.500h8M9.500 11v2" fill="none" stroke="#fff" stroke-width="1.200"/><path d="M.5.5h4v4h-4z" fill="#000" stroke="#fff"/></svg>
    <svg class="y3" viewBox="0 0 17 14"><path d="M.6 4.500h2.500L6.500 1v11L3.100 8.500H.6z" fill="none" stroke="#fff" stroke-width="1.100"/><circle cx="12" cy="9.500" r="4.500" fill="#dc2a2e"/><path d="M10.300 7.800l3.400 3.400M13.700 7.800l-3.400 3.400" stroke="#fff" stroke-width="1.300"/></svg>
    <div class="clock"><span>12:08 AM</span><span>12/17/2024</span></div>
  </div>
</div>

<div class="menu">
  <div>Renew<svg><use href="#ar"/></svg></div><div>Modify without Resending</div><div>Copy</div><div>Modify via Cancel/Reorder</div><div>Suspend</div><div class="off">Activate</div><div>Complete</div><div>Cancel/DC</div><div>Void</div><div>Convert to Inpatient Order</div><hr>
  <div>Print Rx</div><div>Add/Modify Compliance</div><hr>
  <div>Order Information...</div><div class="off">Comments...</div><div>Reference Information...</div><div>Print<svg><use href="#ar"/></svg></div><hr>
  <div>Advanced Filters...</div><div>Customize View...</div><div>Disable Order Information Hyperlink</div>
</div>
</body>
</html>
```
FILE: styles.css
```css
* { box-sizing: border-box; margin: 0; padding: 0; }
body { width: 1920px; height: 1080px; overflow: hidden; position: relative; display: flex; flex-direction: column; font: 12px/16px "Open Sans", "Noto Sans", sans-serif; letter-spacing: -0.34px; color: #000; background: #fff; white-space: nowrap; }
svg { flex: none; display: block; }
ul { list-style: none; }
.defs { position: absolute; width: 0; height: 0; }
.dd { width: 7px; height: 4px; }

.title { height: 23px; background: #f2005c; color: #fff; display: flex; align-items: center; flex: none; }
.applogo { width: 15px; height: 17px; margin: 0 6px 0 2px; }
.winbtns { margin-left: auto; display: flex; gap: 34px; padding: 0 20px 3px 0; }
.winbtns svg { width: 11px; height: 11px; }

.menubar { height: 25px; background: #e6e9ee; display: grid; grid-template-columns: 42px 38px 43px 55px 47px 45px 86px 60px 58px 40px 40px; padding-left: 13px; align-items: center; flex: none; }

.toolbar { height: 26px; background: #e6e9ee; border-top: 1px solid #f0f2f6; border-bottom: 1px solid #d4d7dd; display: grid; align-items: center; flex: none; }
.toolbar b { width: 4px; height: 18px; margin-left: 6px; background: repeating-linear-gradient(#9a9da3 0 2px, transparent 2px 4px); }
.toolbar a { display: flex; align-items: center; }
.toolbar a > svg:first-child { width: 16px; height: 16px; margin-right: 2px; }
.toolbar a .dd { margin-left: auto; margin-right: 4px; }
.toolbar em { border-left: 1px solid #cdd0d6; height: 22px; display: flex; flex-direction: column; justify-content: flex-end; padding-left: 2px; border-right: 1px solid #d4d7dd; }
.toolbar em svg { width: 6px; height: 6px; }
.toolbar em.two { justify-content: space-between; padding-top: 3px; padding-bottom: 2px; }
.t1 { grid-template-columns: 13px 84px 123px 121px 122px 109px 101px 126px 70px 128px 98px 103px 173px 66px 143px 56px 11px; }
.t1 a > svg:first-child { margin-right: 1px; }
.t2 { grid-template-columns: 13px 120px 109px 124px 158px 99px 226px 12px; }
.t3 { grid-template-columns: 14px 22px 53px 46px 58px 12px; color: #8b8e93; }
.t4 { grid-template-columns: 13px 112px 118px 68px 70px 68px 44px 81px 110px 63px 127px 112px 117px 207px 93px 86px 147px 271px 11px; }
.t5 { grid-template-columns: 13px 84px 76px 134px 12px; height: 26px; border-bottom: 0; }
.off { color: #8b8e93; }

.tabbar { height: 27px; background: #074972; display: flex; align-items: flex-end; flex: none; }
.pttab { margin-left: 4px; width: 158px; height: 25px; background: #007ac0; color: #fff; display: flex; align-items: center; padding: 0 0 2px 2px; font-size: 15.5px; font-weight: 600; letter-spacing: 0.55px; }
.pttab span { width: 139px; }
.pttab svg { width: 12px; height: 12px; }
.tabnav { margin-left: auto; height: 27px; display: flex; align-items: center; color: #c3d6e3; padding-right: 9px; }
.nav { width: 13px; height: 10px; }
.lst { margin: 0 8px; width: 18px; }
.recent { display: flex; align-items: center; border: solid #0b3e5e; border-width: 0 1px; height: 27px; margin-left: 8px; padding: 0 4px 0 5px; }
.recent span { width: 36px; margin: 0 7px 0 5px; }
.fold { width: 16px; height: 14px; }
.search { width: 127px; height: 23px; background: #fff; margin: 0 8px 0 3px; display: flex; align-items: center; justify-content: space-between; padding: 0 4px; color: #b9bcc0; }
.search svg { width: 14px; height: 14px; }

.banner { height: 56px; background: #007ac0; color: #fff; font-size: 12.5px; letter-spacing: 0; font-weight: 700; flex: none; display: grid; grid-template-columns: 644px 319px 319px 319px 1fr; line-height: 18px; }
.banner div { padding-top: 1px; }
.banner h1 { font-size: 20px; line-height: 34px; height: 36px; padding-left: 6px; letter-spacing: 0.1px; margin-top: -1px; }
.banner div:first-child p { padding-left: 6px; margin-top: 1px; }
.banner .wide { letter-spacing: 0.14px; }
.blank { height: 18px; }

.work { flex: none; height: 760px; display: flex; }
.toc { width: 210px; flex: none; font-family: "Noto Sans", sans-serif; background: repeating-linear-gradient(128deg, transparent 0 30px, rgba(222,196,226,.25) 34px 40px, transparent 52px 84px), linear-gradient(128deg, #dedede 0%, #c9c8ca 42%, #cdcbce 55%, #e4e2e6 75%, #fbfafc 100%); }
.tochead { height: 26px; background: #00507a; color: #fff; display: flex; align-items: center; padding: 0 8px 0 5px; font-family: "Open Sans", sans-serif; }
.tochead b { width: 3px; height: 18px; background: repeating-linear-gradient(#fff 0 3px, transparent 3px 5px); }
.tochead span { margin-left: 6px; flex: 1; }
.tochead svg { width: 8px; height: 10px; }
.tocbody { display: flex; height: 366px; }
.tocmain { width: 192px; }
.toctabs { display: flex; height: 22px; font: 13px/19px "Open Sans", sans-serif; text-align: center; border-top: 1px solid #fff; }
.toctabs span { width: 95px; background: #f7f5f9; border: 1px solid #4682b4; border-width: 1px 0 1px 1px; margin-left: 1px; color: #333; }
.toctabs .sel { width: 96px; background: #4682b4; color: #fff; margin: 0; font-weight: 600; }
.toc ul { padding-top: 1px; }
.toc li { height: 22.8px; line-height: 22px; padding-left: 23.5px; display: flex; padding-right: 10px; }
.toc li.m::after { content: ""; width: 9px; height: 9px; margin: 7px 0 0 auto; background: linear-gradient(#000, #000) 0 3.500px/9px 2px no-repeat, linear-gradient(#000, #000) 3.500px 0/2px 9px no-repeat; }
.toc li.skip { margin-top: 28px; }
.sb { background: #f5f3f7; display: flex; flex-direction: column; align-items: center; }
.sb svg { width: 12px; height: 8px; }
.sb i { background: #cdcdcd; }
.tocsb { width: 17px; padding-top: 17px; }
.tocsb i { width: 15px; height: 174px; margin: 9px 0 133px; }
.toc h2 { height: 22px; margin: 6px 1px 0; background: #4682b4; color: #fff; font-size: 17px; line-height: 23px; padding-left: 4px; letter-spacing: -0.4px; }
.toc h2.fyi { margin-top: 226px; letter-spacing: -0.8px; }
.strip { width: 4px; background: #156a9f; flex: none; }
main { flex: 1; display: flex; flex-direction: column; }
.pagebar { height: 27px; background: #0663a4; display: flex; align-items: center; color: #b5d6ea; flex: none; }
.prev, .next { width: 8px; height: 12px; margin-left: 11px; }
.next { margin-left: 19px; }
.pagebar > .dd { margin-left: 21px; }
.here { height: 27px; border-left: 1px solid #0f527f; margin-left: 16px; padding-left: 6px; display: flex; align-items: center; gap: 13px; color: #e5f1f8; padding-top: 1px; letter-spacing: 0; }
.here svg { width: 16px; height: 16px; }
.pagetools { margin-left: auto; display: flex; align-items: center; padding-right: 6px; }
.pagetools svg { width: 16px; height: 16px; margin-right: 5px; }
.pagetools .pr { margin: 0 6px 0 19px; width: 15px; }
.pagetools .rf { margin: 0 5px 0 19px; height: 14px; }

.actions { height: 42px; flex: none; display: flex; padding: 10px 8px 0 16px; }
.act { display: flex; height: 18px; align-items: center; }
.ai { width: 14px; height: 14px; margin-right: 3px; }
.act + .act { border-left: 1px solid #909090; padding-left: 6px; }
.act .dd { margin: -3px 0 0 1px; }
.a1 { width: 45px; }
.a1 .ai { width: 12px; height: 12px; margin-right: 4px; }
.a2 { width: 183px; letter-spacing: -0.3px; }
.a3 { width: 99px; }
.act.a3 { padding-left: 8px; }
.a3 .dd { margin-left: 2px; }
.a4 { width: 128px; }
.a5 { width: 140px; }
.a5 .ai { width: 16px; height: 16px; margin-right: 2px; }
.act.a6 { padding-left: 8px; }
.recon { margin: -5px 0 0 auto; width: 268px; height: 33px; border: 1px solid #dcdcdc; padding: 0 0 0 6px; display: flex; align-items: center; align-self: flex-start; }
.recon legend { margin-left: 1px; padding: 0 1px; line-height: 18px; letter-spacing: -0.3px; }
.recon span { margin: -2px 8px 0 4px; width: 70px; }
.recon svg { width: 16px; height: 12px; margin-top: -3px; }
.recon .adm { width: 15px; height: 14px; }
.recon .adm + span { width: 56px; margin-right: 9px; }
.recon .dis { width: 14px; height: 14px; }
.recon .dis + span { width: 52px; margin: -2px 0 0 5px; }

.tabs { height: 19px; flex: none; display: flex; align-items: flex-end; padding-left: 7px; }
.tabs span { height: 17px; border: 1px solid #dcdcdc; border-bottom: 0; padding: 0 4px; background: #f7f3f7; line-height: 16px; width: 91px; border-left-width: 0; }
.tabs span:last-child { width: 105px; padding-left: 6px; }
.tabs .cur { background: #fff; height: 20px; font-weight: 700; width: 54px; padding-left: 5px; border-left-width: 1px; line-height: 18px; margin-bottom: -1px; position: relative; letter-spacing: -0.6px; }
.panel { flex: none; height: 663px; margin: 0 8px 0 7px; border: 1px solid #dcdcdc; display: flex; padding: 0 9px 0 8px; gap: 7px; }
.leftcol { width: 418px; }
.collapse { height: 32px; padding: 19px 3px 0 0; display: flex; justify-content: flex-end; }
.collapse svg { width: 9px; height: 10px; }
.viewhead { height: 19px; background: #aec3ce; border: 2px solid #9aa0a8; border-width: 2px 1px 1px; text-align: center; line-height: 16px; font-weight: 600; padding-right: 6px; }
.treewrap { height: 546px; background: #e6e6f0; border: solid #9aa0a8; border-width: 0 1px; display: flex; overflow: hidden; justify-content: space-between; }
.tree { padding-left: 4px; }
.tree li { height: 18px; display: flex; align-items: center; }
.tree i { width: 10px; height: 18px; flex: none; }
.tree i:last-of-type { margin-right: 1px; }
.v, .t { background: repeating-linear-gradient(#85858f 0 1px, transparent 1px 2px) 4px 0/1px 18px no-repeat; }
.t { background: repeating-linear-gradient(#85858f 0 1px, transparent 1px 2px) 4px 0/1px 18px no-repeat, repeating-linear-gradient(90deg, #85858f 0 1px, transparent 1px 2px) 4px 10px/5px 1px no-repeat; }
.l { background: repeating-linear-gradient(#85858f 0 1px, transparent 1px 2px) 4px 0/1px 11px no-repeat, repeating-linear-gradient(90deg, #85858f 0 1px, transparent 1px 2px) 4px 10px/5px 1px no-repeat; }
.f { background: repeating-linear-gradient(#85858f 0 1px, transparent 1px 2px) 4px 10px/1px 8px no-repeat, repeating-linear-gradient(90deg, #85858f 0 1px, transparent 1px 2px) 4px 10px/5px 1px no-repeat; }
.x { background: repeating-linear-gradient(#85858f 0 1px, transparent 1px 2px) 4px 0/1px 18px no-repeat; padding-top: 6px; }
.x.end { background-size: 1px 6px; }
.x svg { width: 10px; height: 10px; }
.tree li > svg { width: 13px; height: 13px; margin: 0 2px 0 -2px; }
.b { font-weight: 600; letter-spacing: -0.22px; }
.b.c { letter-spacing: -0.38px; }
.hl { background: #f7f5f9; line-height: 18px; margin-left: -1px; padding: 0 1px; }
.treesb { width: 17px; padding-top: 5px; }
.treesb i { width: 15px; height: 335px; margin: 4px 0 183px; }
.treesb svg { transform: scale(.8); }
.drawer { height: 18px; background: #aec3ce; border: 1px solid #9aa0a8; text-align: center; line-height: 15px; padding-right: 6px; }
.drawer.off { color: #6c7278; }

.rightcol { width: 1247px; padding-top: 17px; }
.filter { height: 34px; background: #efebef; border: 1px solid #ccc8ce; outline: 1px solid #f4f2f5; display: flex; justify-content: space-between; align-items: center; padding: 3px 4px 0 6px; color: #0a66a2; font: 11.500px/16px "Liberation Sans", Arial, sans-serif; letter-spacing: -0.38px; }
.more { color: #9c9c9c; text-shadow: 1px 1px #fff; letter-spacing: -0.48px; }
.grid { margin-top: 9px; height: 525px; border: 1px solid #666; background: #fff; overflow: hidden; }
.row { display: grid; grid-template-columns: 111px 23px 58px 304px 110px 1fr; height: 18px; border-bottom: 1px solid #c2c2c8; line-height: 18px; }
.row > u { text-decoration: none; padding: 4px 0 0 8px; }
.row > u svg { width: 5px; height: 10px; }
.row > s { padding-left: 3px; }
.row > s svg { width: 16px; height: 14px; }
.row > q { quotes: none; display: flex; align-items: flex-start; padding: 2px 0 0 4px; }
.row > q svg { flex: none; }
.row a { color: #3a86e8; }
.row.tall { height: 35px; }
.row.tall span { line-height: 16px; padding-top: 1px; }
.snug { letter-spacing: -0.4px; }
.airy { letter-spacing: -0.29px; }
.pl { width: 12px; height: 12px; margin-right: 3px; }
.gl { width: 17px; height: 11px; margin: 0 4px 0 0; }
.pa { width: 10px; height: 12px; }
.pa.mid { margin-left: 4px; }
.pa.one { margin-left: 2px; }
.iv { width: 15px; height: 13px; }
.ho { width: 10px; height: 13px; margin: -1px 0 0 4px; }
.row.head { grid-template-columns: 22px 22px 68px 22px 56px 304px 110px 1fr; height: 20px; background: #f7f7f7; border-bottom: 1px solid #9c9c9c; line-height: 20px; color: #444; }
.row.head > span { border-right: 1px solid #b4b4b4; padding-left: 2px; }
.row.head > span:last-child { padding-left: 2px; }
.head .c { display: flex; align-items: center; }
.pill { width: 16px; height: 16px; }
.flag { width: 10px; height: 12px; margin-left: 3px; }
.dol { color: #1d4a1c; font-weight: 700; }
.row.head .dol { padding-left: 7px; }
.group { height: 17px; background: #cddeee; border-bottom: 1px solid #c2c6ce; display: flex; align-items: center; padding: 1px 0 0 6px; font-weight: 600; color: #333; letter-spacing: -0.25px; line-height: 18px; }
.group svg { width: 9px; height: 8px; margin-right: 9px; }
.picked { background: repeating-linear-gradient(90deg, #c87a2c 0 1px, #3399ff 1px 2px) 0 0/100% 1px no-repeat, repeating-linear-gradient(90deg, #c87a2c 0 1px, #3399ff 1px 2px) 0 16px/100% 1px no-repeat, #3399ff; color: #fff; }
.picked a { color: #fff; }
.detailbar { margin-top: 5px; height: 33px; border: 1px solid #666; padding: 12px 0 0 2px; }
.detailbar svg { width: 12px; height: 9px; }
.buttons { display: flex; margin-top: 9px; gap: 8px; }
.buttons button { height: 18px; font: 11.500px/14px "Liberation Sans", Arial, sans-serif; letter-spacing: -0.45px; background: #e9e5e9; border: 1px solid #a8a8ac; color: #000; }
.buttons button:disabled { background: #cfcfcf; border-color: #bdbdbd; color: #858585; }
.buttons .dx { width: 81px; letter-spacing: -0.3px; }
.cos { width: 128px; }
.sig { width: 118px; margin-left: auto; }

.status { height: 19px; flex: none; background: #f7f3f7; border-top: 1px solid #d8d8d8; display: grid; grid-template-columns: 1244px 363px 34px 63px 157px 1fr; line-height: 19px; font-weight: 600; letter-spacing: -0.6px; }
.status span { border-right: 1px solid #d0d0d0; padding-left: 4px; }
.status::before { content: ""; border-right: 1px solid #d0d0d0; margin: 1px 0; }
.status span:first-child { padding: 0; }
.status span:last-child { border: 0; }

.taskbar { height: 40px; flex: none; background: #000; display: flex; color: #fff; }
.tb { width: 49px; height: 40px; display: flex; align-items: center; justify-content: center; }
.tb:nth-child(-n+2) { width: 48px; }
.tb.ie { width: 50px; }
.run { border-bottom: 2px solid #f07cb0; width: 41px; margin: 0 4px; padding-top: 2px; }
.front { background: #333; border-bottom: 2px solid #f07cb0; }
.hot { background: #9c5018; border-bottom: 2px solid #ff7800; width: 48px; }
.tray { margin-left: auto; display: flex; align-items: center; padding-right: 4px; }
.y1 { width: 12px; height: 8px; margin-right: 10px; }
.y2 { width: 16px; height: 14px; margin-right: 8px; }
.y3 { width: 17px; height: 14px; margin-right: 5px; }
.clock { width: 63px; display: flex; flex-direction: column; text-align: center; line-height: 18px; border-right: 1px solid #444; height: 40px; padding: 2px 5px 0 0; letter-spacing: -0.45px; }

.menu { position: absolute; left: 969px; top: 332px; width: 281px; height: 445px; background: #f7f3f7; border: 1px solid #ccc; padding-top: 2px; }
.menu div { height: 22px; line-height: 22px; padding: 0 11px 0 34px; display: flex; justify-content: space-between; align-items: center; }
.menu div svg { width: 6px; height: 9px; }
.menu hr { border: 0; border-top: 1px solid #d4d0d4; margin: 3px 2px 3px 30px; }
```
